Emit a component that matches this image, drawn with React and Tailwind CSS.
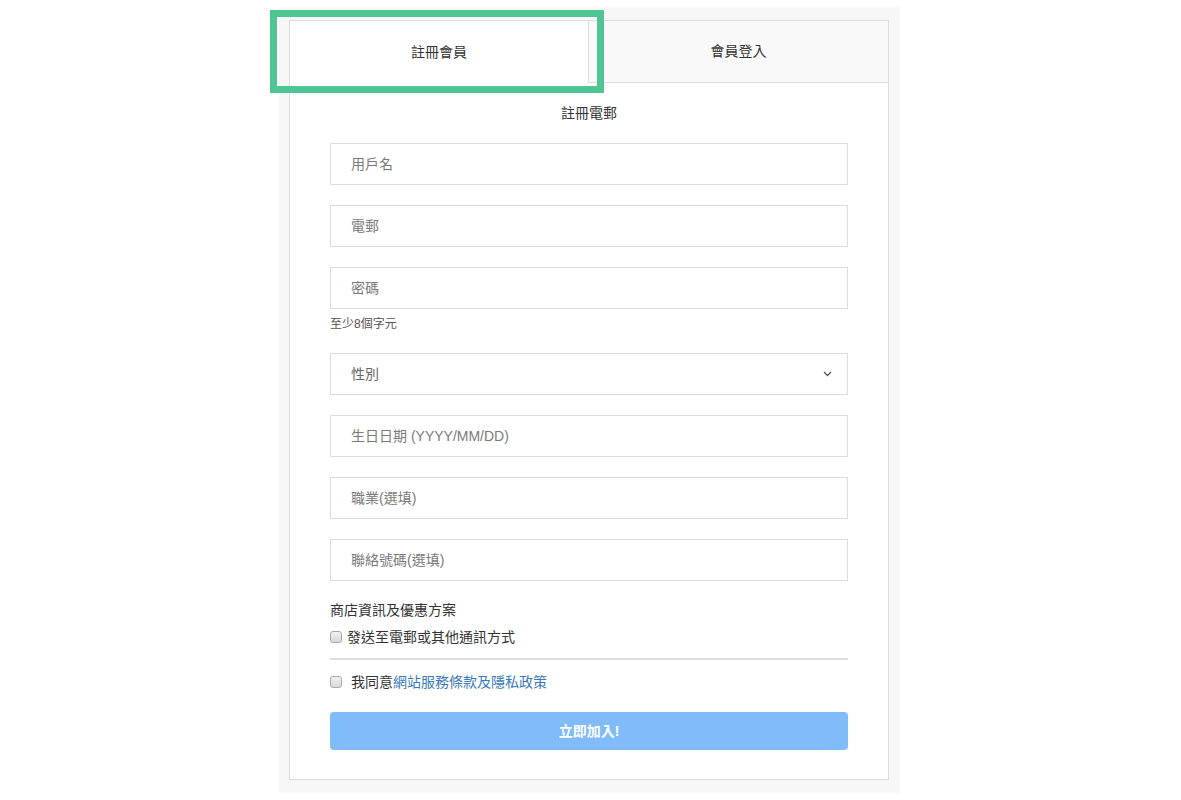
const font = { fontFamily: '"Liberation Sans", Arial, "Noto Sans CJK TC", sans-serif' };

function Field({ placeholder }) {
  return (
    <input
      type="text"
      placeholder={placeholder}
      className="w-full h-[42px] border border-[#dcdcdc] bg-white px-[20px] text-[14px] text-[#333] placeholder:text-[#7a7a7a] outline-none"
    />
  );
}

function Box() {
  return (
    <span className="inline-block w-[12px] h-[12px] rounded-[3px] border border-[#a9a9a9] bg-gradient-to-b from-[#f2f2f2] to-[#d8d8d8] shrink-0" />
  );
}

export default function App() {
  return (
    <div className="min-h-screen bg-white text-[#333]" style={font}>
      <div className="flex justify-center pt-[7px] pr-[2px]">
        <div className="relative w-[621px] bg-[#f7f7f7] pt-[13px] pb-[13px] pl-[10px] pr-[11px]">
          {/* highlight frame */}
          <div className="absolute left-[-9px] top-[3px] w-[334px] h-[83px] border-[7px] border-[#4fc593] pointer-events-none" />

          <div className="w-[600px] border border-[#dddddd] bg-white">
            <div className="flex h-[62px] text-[14px]">
              <div className="w-[298px] flex items-center justify-center bg-white text-[#333]">
                註冊會員
              </div>
              <div className="flex-1 flex items-center justify-center bg-[#f9f9f9] border-l border-b border-[#dddddd] text-[#333]">
                會員登入
              </div>
            </div>

            <form className="px-[40px] pt-[20px] pb-[29px]">
              <div className="text-center text-[14px] leading-[20px] text-[#333]">註冊電郵</div>

              <div className="mt-[20px] flex flex-col gap-[20px]">
                <Field placeholder="用戶名" />
                <Field placeholder="電郵" />
                <div>
                  <Field placeholder="密碼" />
                  <div className="mt-[6px] text-[12px] leading-[18px] text-[#555]">至少8個字元</div>
                </div>
                <div className="relative w-full h-[42px] border border-[#dcdcdc] bg-white px-[20px] flex items-center justify-between text-[14px] text-[#666]">
                  <span>性別</span>
                  <svg width="9" height="6" viewBox="0 0 9 6" className="mr-[-5px]">
                    <path d="M1 1l3.5 3.5L8 1" fill="none" stroke="#555" strokeWidth="1.3" />
                  </svg>
                </div>
                <Field placeholder="生日日期 (YYYY/MM/DD)" />
                <Field placeholder="職業(選填)" />
                <Field placeholder="聯絡號碼(選填)" />
              </div>

              <div className="mt-[19px] text-[14px] leading-[20px] text-[#333]">商店資訊及優惠方案</div>
              <label className="mt-[7px] flex items-center gap-[5px] text-[14px] leading-[20px] text-[#333]">
                <Box />
                <span>發送至電郵或其他通訊方式</span>
              </label>

              <div className="mt-[11px] h-[2px] bg-[#dddddd]" />

              <label className="mt-[12px] flex items-center gap-[9px] text-[14px] leading-[20px] text-[#333]">
                <Box />
                <span>
                  我同意<a className="text-[#3a78b8]">網站服務條款及隱私政策</a>
                </span>
              </label>

              <button
                type="button"
                className="mt-[20px] w-full h-[38px] rounded-[4px] bg-[#80bbfa] text-white text-[14px] font-bold"
              >
                立即加入!
              </button>
            </form>
          </div>
        </div>
      </div>
    </div>
  );
}
